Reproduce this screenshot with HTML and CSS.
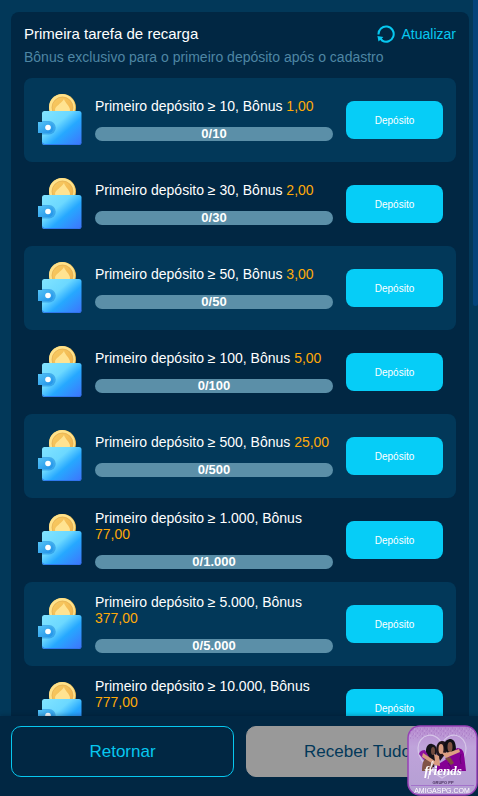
FILE: index.html
```html
<!DOCTYPE html>
<html lang="pt-BR">
<head>
    <meta charset="UTF-8">
    <meta name="viewport" content="width=device-width, initial-scale=1.0">
    <title>Primeira tarefa de recarga</title>
    <link rel="stylesheet" href="styles.css">
</head>
<body>

    <svg class="defs" width="0" height="0" aria-hidden="true">
        <defs>
            <linearGradient id="walletFill" x1="0" y1="0" x2="1" y2="1">
                <stop offset="0" stop-color="#82e4ff"/>
                <stop offset=".38" stop-color="#6cd8ff"/>
                <stop offset=".6" stop-color="#26a8ff"/>
                <stop offset="1" stop-color="#3f73fc"/>
            </linearGradient>
            <linearGradient id="claspFill" x1="0" y1="0" x2="1" y2="1">
                <stop offset="0" stop-color="#55c3f6"/>
                <stop offset="1" stop-color="#1d8fe8"/>
            </linearGradient>
            <linearGradient id="coinFill" x1="0" y1="0" x2="1" y2="1">
                <stop offset="0" stop-color="#f8cc63"/>
                <stop offset="1" stop-color="#f0b04a"/>
            </linearGradient>
            <symbol id="wallet" viewBox="0 0 60 70">
                <circle cx="32.5" cy="22.5" r="13.5" fill="#e9b851"/>
                <circle cx="32" cy="22" r="13" fill="#ffe28a"/>
                <circle cx="32.5" cy="22.5" r="10.5" fill="url(#coinFill)" stroke="#dca347" stroke-width=".6"/>
                <path d="M34 14c1 4 6 7 6 11 0 3-4 4-6 2l1 4h-6l2-4c-3 1-6 0-6-2 0-4 6-6 9-11z" fill="#ffe391"/>
                <rect x="12" y="26" width="39.5" height="34" rx="2.5" fill="url(#walletFill)"/>
                <path d="M12.500 57.500q0 2 2.500 2h33.500q2.500 0 2.500-2" fill="none" stroke="#2e70e8" stroke-width=".8"/>
                <path d="M12 36h7a6.500 6.500 0 0 1 0 13.500h-7z" fill="#1b86dd" opacity=".55"/>
                <path d="M8 37h10a5.500 5.500 0 0 1 0 11H8z" fill="url(#claspFill)"/>
                <circle cx="18" cy="42.500" r="2.800" fill="#fff"/>
            </symbol>
        </defs>
    </svg>

    <main class="content">
        <section class="panel">
            <header class="panel-header">
                <h1>Primeira tarefa de recarga</h1>
                <button class="refresh" type="button">
                    <svg viewBox="0 0 18 18" width="18" height="18" fill="none" stroke="currentColor" stroke-width="2">
                        <path d="M1.500 9.500A7.600 7.600 0 1 1 5.200 15.600"/>
                        <path d="M.4 11l6 .9-1.600 1.600 1.600 1.800-1.400 1.400-1.800-1.600-1.700 1.500z" fill="currentColor" stroke="none"/>
                    </svg>
                    Atualizar
                </button>
            </header>
            <p class="subtitle">Bônus exclusivo para o primeiro depósito após o cadastro</p>

            <ul class="tasks">
                <li class="task">
                    <svg class="wallet"><use href="#wallet"/></svg>
                    <div class="info">
                        <p>Primeiro depósito ≥ 10, Bônus <span class="bonus">1,00</span></p>
                        <div class="progress">0/10</div>
                    </div>
                    <button class="deposit" type="button">Depósito</button>
                </li>
                <li class="task">
                    <svg class="wallet"><use href="#wallet"/></svg>
                    <div class="info">
                        <p>Primeiro depósito ≥ 30, Bônus <span class="bonus">2,00</span></p>
                        <div class="progress">0/30</div>
                    </div>
                    <button class="deposit" type="button">Depósito</button>
                </li>
                <li class="task">
                    <svg class="wallet"><use href="#wallet"/></svg>
                    <div class="info">
                        <p>Primeiro depósito ≥ 50, Bônus <span class="bonus">3,00</span></p>
                        <div class="progress">0/50</div>
                    </div>
                    <button class="deposit" type="button">Depósito</button>
                </li>
                <li class="task">
                    <svg class="wallet"><use href="#wallet"/></svg>
                    <div class="info">
                        <p>Primeiro depósito ≥ 100, Bônus <span class="bonus">5,00</span></p>
                        <div class="progress">0/100</div>
                    </div>
                    <button class="deposit" type="button">Depósito</button>
                </li>
                <li class="task">
                    <svg class="wallet"><use href="#wallet"/></svg>
                    <div class="info">
                        <p>Primeiro depósito ≥ 500, Bônus <span class="bonus">25,00</span></p>
                        <div class="progress">0/500</div>
                    </div>
                    <button class="deposit" type="button">Depósito</button>
                </li>
                <li class="task">
                    <svg class="wallet"><use href="#wallet"/></svg>
                    <div class="info">
                        <p>Primeiro depósito ≥ 1.000, Bônus <span class="bonus">77,00</span></p>
                        <div class="progress">0/1.000</div>
                    </div>
                    <button class="deposit" type="button">Depósito</button>
                </li>
                <li class="task">
                    <svg class="wallet"><use href="#wallet"/></svg>
                    <div class="info">
                        <p>Primeiro depósito ≥ 5.000, Bônus <span class="bonus">377,00</span></p>
                        <div class="progress">0/5.000</div>
                    </div>
                    <button class="deposit" type="button">Depósito</button>
                </li>
                <li class="task">
                    <svg class="wallet"><use href="#wallet"/></svg>
                    <div class="info">
                        <p>Primeiro depósito ≥ 10.000, Bônus <span class="bonus">777,00</span></p>
                        <div class="progress"></div>
                    </div>
                    <button class="deposit" type="button">Depósito</button>
                </li>
            </ul>
        </section>
        <div class="scroll-thumb"></div>
    </main>

    <footer class="actions">
        <button class="back" type="button">Retornar</button>
        <button class="claim" type="button" disabled>Receber Tudo</button>
    </footer>

    <a class="promo" href="#" aria-label="AMIGASPG.COM">
        <svg viewBox="0 0 71 71">
            <defs>
                <linearGradient id="promoFill" x1="0" y1="0" x2="0" y2="1">
                    <stop offset="0" stop-color="#b689cf"/>
                    <stop offset=".3" stop-color="#bfa3da"/>
                    <stop offset="1" stop-color="#b49fd3"/>
                </linearGradient>
                <pattern id="glitter" width="7" height="5" patternUnits="userSpaceOnUse">
                    <path d="M1 1h1M5 0h1M3 3h1M6 4h1" stroke="#9b65b8" stroke-width="1"/>
                    <path d="M3 1h1M0 4h1" stroke="#d5b5e5" stroke-width="1"/>
                </pattern>
            </defs>
            <rect x="1" y="1" width="69" height="69" rx="12" fill="url(#promoFill)" stroke="#9640b5" stroke-width="1.5"/>
            <path d="M13 2h45q11 0 11 11l-9 1-8-3-12 2-12-3-12 3-14 1v-1q0-11 11-11z" fill="url(#glitter)" opacity=".6"/>
            <path d="M35 53C20 44 11 34 11 23c0-13 17-19 24-4 7-15 24-9 24 4 0 11-9 21-24 30z" fill="none" stroke="#d6c6e8" stroke-width="1.2"/>
            <!-- hair -->
            <path d="M17 38c1-6 2-9 2-12 0-5 3-8 6-7 6 1 5 8 4 13l-2 10-8 1z" fill="#15121a"/>
            <path d="M29 27c0-7 2-11 6-11 6 0 6 7 4 12l-6 8z" fill="#21151a"/>
            <path d="M37 22c0-6 3-8 7-8 5 1 5 8 5 14l-5 8z" fill="#100f14"/>
            <!-- purple clothes -->
            <path d="M12 29q1-4 6-4l4 7-5 3z" fill="#8d109f"/>
            <path d="M30 40l8-5 12-12q6 0 7 6l2 17H30z" fill="#850094"/>
            <path d="M41 38q3 3 4 8M54 29q-2 5 0 10" fill="none" stroke="#5b006b" stroke-width=".8"/>
            <!-- faces and arms -->
            <ellipse cx="26" cy="26" rx="2" ry="4" fill="#704a3e"/>
            <ellipse cx="34" cy="24" rx="2.5" ry="5" fill="#d79c80"/>
            <ellipse cx="43" cy="22" rx="2.5" ry="5" fill="#815344"/>
            <path d="M15 46c0-7 1-12 5-12l7 5-3 7z" fill="#805346"/>
            <path d="M16 28l12 8-1-7 5 2 1 10-5-1-13-8z" fill="#d99c7f"/>
            <path d="M34 27c6 2 11-1 18-3l1 3-14 6z" fill="#dda083"/>
            <path d="M38 33l5-1 4 6-3 2z" fill="#7d4c3e"/>
            <text x="36" y="50" class="promo-script" text-anchor="middle">friends</text>
            <path d="M19 45c-1 3 4 0 6-5 2-3 1-5 0-3l-4 17" fill="none" stroke="#fff" stroke-width=".9"/>
            <text x="36" y="59" class="promo-group" text-anchor="middle">GRUPO PP</text>
            <path d="M4 60.500h63" stroke="#a473cb" stroke-width="1"/>
            <text x="35" y="68" class="promo-site" text-anchor="middle">AMIGASPG.COM</text>
        </svg>
    </a>

</body>
</html>
```

FILE: styles.css
```css
* { box-sizing: border-box; margin: 0; padding: 0; }
body { height: 100vh; display: flex; flex-direction: column; overflow: hidden; background-color: #023859; color: #fff; font-family: "Liberation Sans", Arial, sans-serif; }
button { border: none; background: none; font-family: inherit; cursor: pointer; }
.defs { position: absolute; }

.content { position: relative; flex: 1; min-height: 0; overflow: hidden; padding: 12px 9px 0 11px; }
.panel { background-color: #012743; border-radius: 8px; padding: 12px 13px; }
.panel-header { display: flex; justify-content: space-between; align-items: center; height: 20px; }
h1 { font-size: 15px; font-weight: normal; line-height: 20px; }
.refresh { display: flex; align-items: center; gap: 7px; color: #07c8f0; font-size: 14px; line-height: 20px; }
.subtitle { margin-top: 4px; font-size: 14px; line-height: 18px; color: #4e86a4; }

.tasks { list-style: none; margin-top: 12px; }
.task { display: flex; align-items: center; height: 84px; padding: 0 13px 0 6px; border-radius: 8px; }
.task:nth-child(odd) { background-color: #023859; }
.wallet { flex: none; width: 60px; height: 70px; }
.info { flex: 1; display: flex; flex-direction: column; gap: 13px; margin: 0 13px 2px 5px; }
.info p { font-size: 14px; line-height: 16px; }
.bonus { color: #ffaa09; }
.progress { height: 14px; border-radius: 7px; background-color: #5b8fa8; font-size: 13px; font-weight: bold; line-height: 13px; text-align: center; }
.deposit { flex: none; width: 97px; height: 38px; border-radius: 8px; background-color: #06cdf7; color: #fff; font-size: 10px; }
.scroll-thumb { position: absolute; top: 0; right: 0; width: 5px; height: 306px; border-radius: 0 0 3px 3px; background-color: #04437a; }

.actions { position: relative; display: flex; gap: 12px; padding: 10px 9px 19px 11px; background-color: #012743; box-shadow: 0 -1px 4px rgba(0, 20, 40, 0.3); }
.actions button { flex: 1; height: 51px; border: 1px solid #07c8f0; border-radius: 10px; color: #07c8f0; font-size: 17px; }
.actions .claim { border-color: #999; background-color: #999; color: #023859; }

.promo { position: fixed; right: 0; bottom: 0; width: 71px; height: 71px; }
.promo svg { display: block; width: 100%; height: 100%; }
.promo-script { font: italic bold 13px "Liberation Serif", serif; fill: #fff; }
.promo-group { font: bold 4px "Liberation Sans", sans-serif; fill: #49305e; }
.promo-site { font: 7px "Liberation Sans", sans-serif; fill: #fff; }
```
